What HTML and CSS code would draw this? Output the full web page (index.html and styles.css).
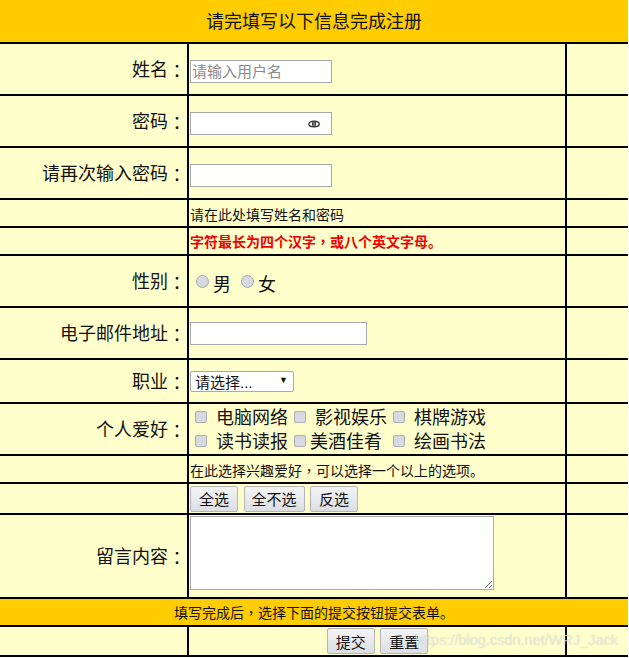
FILE: index.html
```html
<!DOCTYPE html>
<html lang="en">
<head>
    <meta charset="utf-8">
    <title>注册</title>
    <link rel="stylesheet" href="styles.css">
</head>
<body>
    <form class="reg-form">
        <table class="reg-table">
            <colgroup>
                <col class="col-label">
                <col class="col-field">
                <col class="col-extra">
            </colgroup>
            <tr class="row-title">
                <td colspan="3" class="band band-title">请完填写以下信息完成注册</td>
            </tr>
            <tr class="row-52">
                <td class="label">姓名<span class="punct">：</span></td>
                <td class="low"><input type="text" class="text-input" placeholder="请输入用户名"></td>
                <td></td>
            </tr>
            <tr class="row-52">
                <td class="label">密码<span class="punct">：</span></td>
                <td class="low">
                    <span class="pwd-wrap">
                        <input type="password" class="text-input">
                        <svg class="eye" width="12" height="8" viewBox="0 0 12 8">
                            <ellipse cx="6" cy="4" rx="5.2" ry="2.8" fill="none" stroke="#333" stroke-width="1.4"/>
                            <circle cx="6" cy="4" r="2.2" fill="#333"/>
                            <rect x="5.6" y="2" width="0.8" height="4" fill="#ddd"/>
                        </svg>
                    </span>
                </td>
                <td></td>
            </tr>
            <tr class="row-52">
                <td class="label">请再次输入密码<span class="punct">：</span></td>
                <td class="low"><input type="password" class="text-input"></td>
                <td></td>
            </tr>
            <tr class="row-28">
                <td></td>
                <td class="note note-low">请在此处填写姓名和密码</td>
                <td></td>
            </tr>
            <tr class="row-28">
                <td></td>
                <td class="note note-red">字符最长为四个汉字<span class="punct">，</span>或八个英文字母。</td>
                <td></td>
            </tr>
            <tr class="row-52">
                <td class="label">性别<span class="punct">：</span></td>
                <td class="gender">
                    <label class="sex"><input type="radio" name="sex" class="radio">男</label>
                    <label class="sex"><input type="radio" name="sex" class="radio">女</label>
                </td>
                <td></td>
            </tr>
            <tr class="row-52">
                <td class="label">电子邮件地址<span class="punct">：</span></td>
                <td><input type="text" class="text-input email-input"></td>
                <td></td>
            </tr>
            <tr class="row-44">
                <td class="label">职业<span class="punct">：</span></td>
                <td>
                    <span class="select-wrap">
                        <select class="job-select">
                            <option>请选择...</option>
                        </select>
                        <span class="select-arrow">▼</span>
                    </span>
                </td>
                <td></td>
            </tr>
            <tr class="row-52">
                <td class="label">个人爱好<span class="punct">：</span></td>
                <td class="hobbies">
                    <div class="hobby-line">
                        <input type="checkbox" class="check"><span class="hobby-wide">电脑网络</span>
                        <input type="checkbox" class="check"><span class="hobby-wide">影视娱乐</span>
                        <input type="checkbox" class="check"><span class="hobby-wide">棋牌游戏</span>
                    </div>
                    <div class="hobby-line">
                        <input type="checkbox" class="check"><span class="hobby-wide">读书读报</span>
                        <input type="checkbox" class="check"><span class="hobby-narrow">美酒佳肴</span>
                        <input type="checkbox" class="check"><span class="hobby-wide">绘画书法</span>
                    </div>
                </td>
                <td></td>
            </tr>
            <tr class="row-28">
                <td></td>
                <td class="note note-low">在此选择兴趣爱好<span class="punct">，</span>可以选择一个以上的选项。</td>
                <td></td>
            </tr>
            <tr class="row-31">
                <td></td>
                <td>
                    <div class="btn-row">
                        <button type="button" class="btn">全选</button>
                        <button type="button" class="btn">全不选</button>
                        <button type="button" class="btn">反选</button>
                    </div>
                </td>
                <td></td>
            </tr>
            <tr class="row-84">
                <td class="label">留言内容<span class="punct">：</span></td>
                <td class="top"><textarea class="message"></textarea></td>
                <td></td>
            </tr>
            <tr class="row-28">
                <td colspan="3" class="band band-note">填写完成后<span class="punct">，</span>选择下面的提交按钮提交表单。</td>
            </tr>
            <tr class="row-30">
                <td></td>
                <td>
                    <div class="btn-row btn-row-center">
                        <button type="submit" class="btn">提交</button>
                        <button type="reset" class="btn">重置</button>
                    </div>
                </td>
                <td></td>
            </tr>
        </table>
    </form>
    <div class="watermark">https://blog.csdn.net/WRJ_Jack</div>
</body>
</html>
```

FILE: styles.css
```css
* {
    box-sizing: border-box;
}

body {
    margin: 0;
    background: #fff;
    font-family: "Liberation Sans", "Noto Sans CJK SC", sans-serif;
    color: #111;
    position: relative;
    overflow: hidden;
    height: 658px;
}

.punct {
    font-family: "Noto Sans CJK TC", sans-serif;
}

.label .punct {
    vertical-align: -2px;
}

.reg-table {
    width: 628px;
    table-layout: fixed;
    border-collapse: collapse;
    background: #ffffcc;
    border-bottom: 2px solid #000;
}

.col-label { width: 188px; }
.col-extra { width: 62px; }

.reg-table td {
    padding: 0 0 0 1px;
    border-left: 2px solid #000;
    border-top: 2px solid #000;
    vertical-align: middle;
}

.reg-table td:first-child {
    border-left: none;
}

.reg-table .row-title td {
    border-top: none;
}

.row-title { height: 43px; }
.row-52 { height: 52px; }
.row-28 { height: 28px; }
.row-44 { height: 44px; }
.row-31 { height: 31px; }
.row-84 { height: 84px; }
.row-30 { height: 30px; }

.reg-table td.band {
    background: #ffcc00;
    text-align: center;
    padding: 0;
}

.reg-table td.band-title {
    font-size: 18px;
    padding: 0 0 2px 0;
}

.band-note { font-size: 14px; }

.reg-table td.label {
    font-size: 18px;
    text-align: right;
    padding: 0 1px 0 0;
}

.reg-table td.low { padding-top: 4px; }
.reg-table td.top { vertical-align: top; padding-top: 1px; }

.note { font-size: 14px; }
.reg-table td.note-low { padding-top: 2px; }

.note-red {
    color: #f00000;
    font-weight: bold;
}

.text-input {
    display: block;
    width: 142px;
    height: 23px;
    padding: 1px;
    border: 1px solid #a9a9a9;
    background: #fff;
    font-size: 15px;
    font-family: inherit;
}

.text-input::placeholder { color: #8a8a8a; }

.email-input { width: 177px; }

.pwd-wrap {
    display: block;
    position: relative;
    width: 142px;
}

.eye {
    position: absolute;
    right: 12px;
    top: 8px;
}

.reg-table td.gender {
    font-size: 18px;
    padding: 4px 0 0 7px;
}

.sex { margin-right: 5px; }

.radio {
    appearance: none;
    width: 13px;
    height: 13px;
    margin: 0 4px 3px 0;
    border: 1px solid #a9a9a9;
    border-radius: 50%;
    background: #d6d9e2;
}

.reg-table td.hobbies {
    font-size: 18px;
    padding: 1px 0 0 5px;
}

.hobby-line {
    line-height: 24px;
    height: 24px;
    white-space: nowrap;
}

.check {
    appearance: none;
    width: 12px;
    height: 12px;
    margin: 0 0 4px 1px;
    border: 1px solid #b0b0b0;
    border-radius: 2px;
    background: #d6d9e2;
    vertical-align: middle;
}

.hobby-wide { margin-left: 9px; }
.hobby-narrow { margin: 0 5px 0 4px; }

.select-wrap {
    display: block;
    position: relative;
    width: 104px;
}

.job-select {
    display: block;
    appearance: none;
    width: 104px;
    height: 21px;
    padding: 2px 0 0 4px;
    border: 1px solid #a9a9a9;
    border-radius: 2px;
    background: #fff;
    font-size: 15px;
    font-family: inherit;
    color: #111;
}

.select-arrow {
    position: absolute;
    right: 6px;
    top: 3px;
    font-size: 9px;
    line-height: 12px;
    color: #111;
    pointer-events: none;
}

.btn-row {
    display: flex;
    gap: 5.5px;
}

.btn-row-center {
    justify-content: center;
}

.btn {
    min-width: 48px;
    height: 26px;
    padding: 0 7px;
    border: 1px solid #b5b5b5;
    border-radius: 2px;
    background: linear-gradient(#f4f4f4, #dcdee4);
    font-size: 15px;
    font-family: inherit;
    color: #111;
}

.message {
    display: block;
    width: 304px;
    height: 74px;
    margin: 0;
    border: 1px solid #a9a9a9;
    background: #fff;
}

.watermark {
    position: absolute;
    left: 415px;
    top: 632px;
    font-size: 14.5px;
    color: rgba(255, 255, 255, 0.6);
    text-shadow: 0 0 1px rgba(120, 120, 120, 0.45);
    white-space: nowrap;
    pointer-events: none;
}
```
